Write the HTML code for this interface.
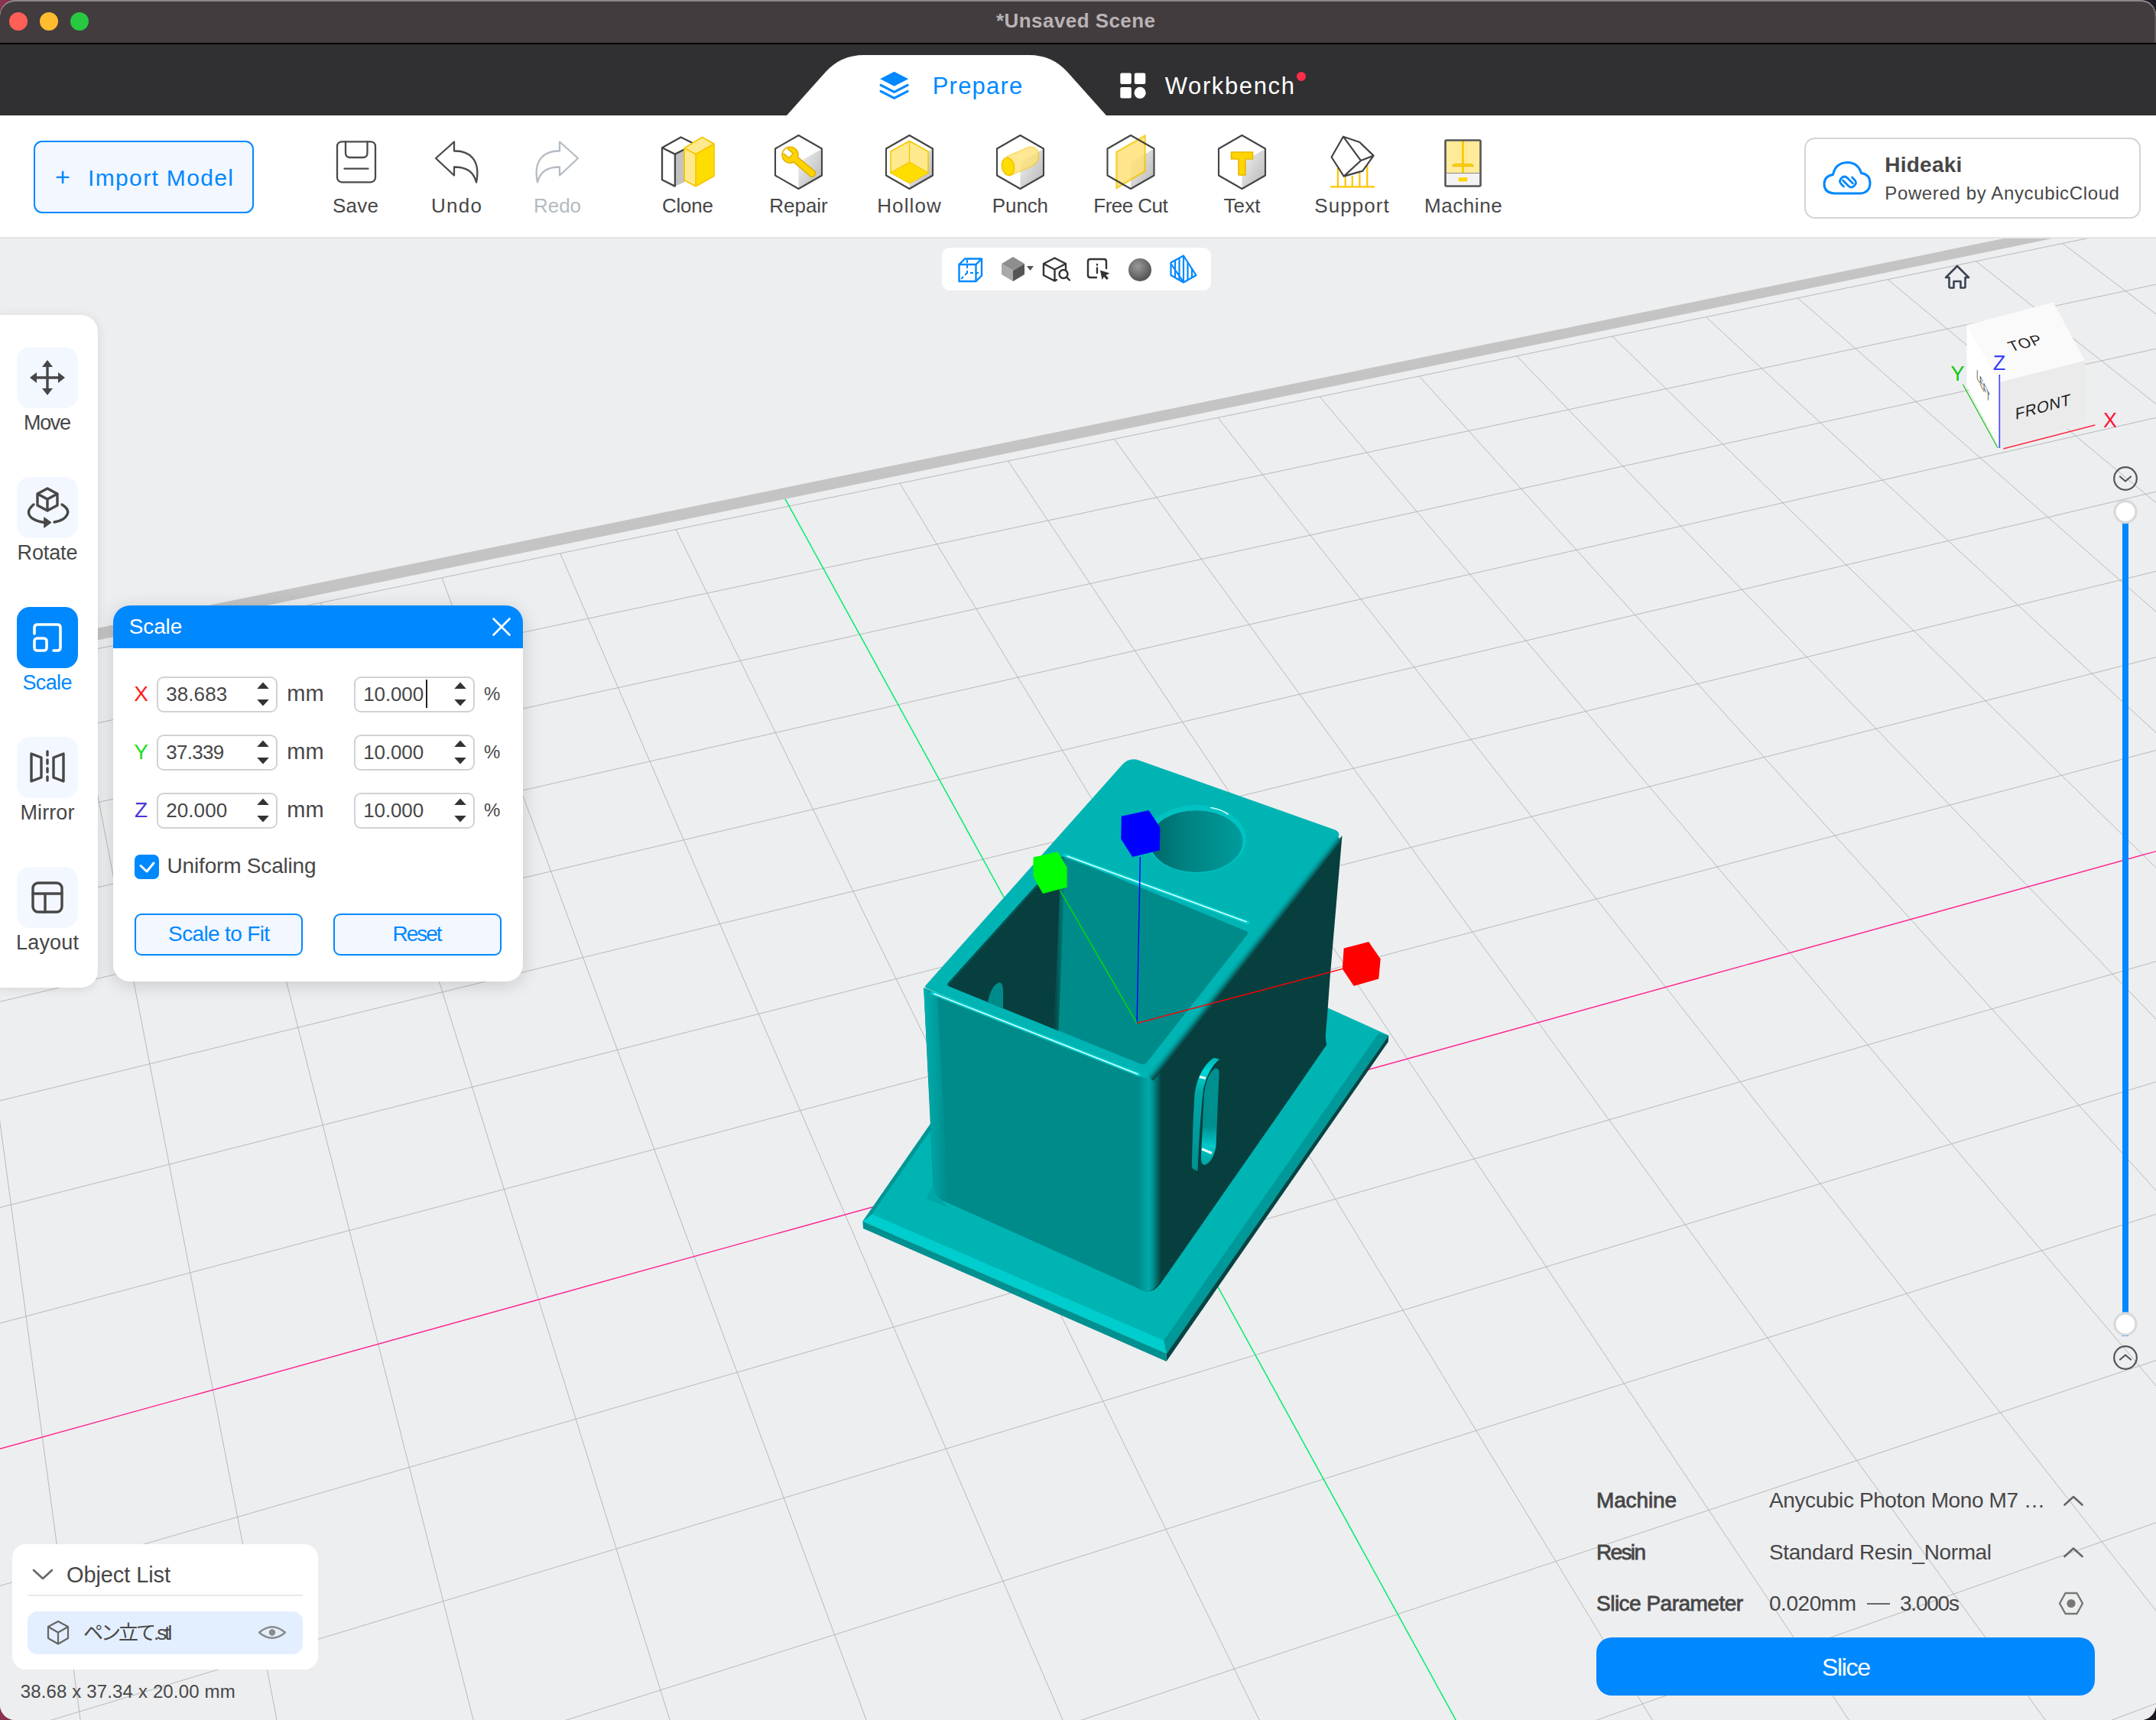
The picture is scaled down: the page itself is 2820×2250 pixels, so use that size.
<!DOCTYPE html>
<html><head><meta charset="utf-8"><title>Unsaved Scene</title>
<style>
html,body{margin:0;padding:0;}
body{width:2820px;height:2250px;position:relative;overflow:hidden;background:linear-gradient(90deg,#8c3450 0,#5a2036 2%,#1c1a22 60%);font-family:"Liberation Sans","Noto Sans CJK JP",sans-serif;}
#win{position:absolute;left:0;top:0;width:2820px;height:2250px;border-radius:20px;overflow:hidden;background:#edeef0;}
.t{position:absolute;white-space:pre;line-height:1;}
svg{display:block;overflow:visible}
</style></head><body><div id="win">
<svg id="scene" width="2820" height="2250" viewBox="0 0 2820 2250" style="position:absolute;left:0;top:0">
<rect x="0" y="300" width="2820" height="1950" fill="#edeef0"/>
<polygon points="-1385,1148.4 3615.8,120.5 3599.8,111.9 -1379.8,1129.8" fill="#c4c4c4" />
<path d="M-1649.3,5158.9L-990.5,1079.4M-1199.4,4955.4L-798.9,1039.9M-774,4763.1L-611.9,1001.3M-371.1,4581L-429.5,963.7M10.8,4408.3L-251.5,926.9M373.5,4244.3L-77.7,891.1M718.4,4088.3L92,856.1M1046.7,3939.9L257.7,821.9M1359.6,3798.4L419.7,788.4M1658.2,3663.4L578,755.8M1943.4,3534.5L732.8,723.9M2216.1,3411.2L884.1,692.6M2727.1,3180.1L1176.9,632.2M2966.9,3071.7L1318.6,603M3197,2967.7L1457.3,574.4M3418.1,2867.7L1593.1,546.4M3630.6,2771.6L1726.1,518.9M3835,2679.2L1856.3,492.1M4031.7,2590.3L1983.9,465.7M4221.3,2504.5L2108.9,439.9M4404.1,2421.9L2231.4,414.7M4580.4,2342.2L2351.5,389.9M4750.6,2265.2L2469.2,365.6M4915,2190.9L2584.7,341.8M5073.9,2119.1L2697.9,318.4M5227.6,2049.6L2809,295.5M5376.2,1982.4L2918,273M5520.1,1917.3L3025,250.9M5659.5,1854.3L3130,229.3M5794.6,1793.2L3233.1,208M5925.6,1734L3334.3,187.1M6052.6,1676.5L3433.7,166.6M-1649.3,5158.9L6052.6,1676.5M-1566.9,4648.6L5805.2,1533.9M-1495.4,4205.4L5575.8,1401.6M-1432.6,3817L5362.6,1278.7M-1377.2,3473.7L5163.9,1164.2M-1327.8,3168.1L4978.2,1057.1M-1283.6,2894.3L4804.4,956.9M-1243.8,2647.7L4641.4,862.9M-1207.7,2424.3L4488,774.5M-1144.9,2035.3L4207.4,612.7M-1117.4,1864.9L4078.6,538.5M-1092,1708L3956.8,468.2M-1068.6,1563.1L3841.3,401.6M-1046.9,1428.8L3731.6,338.4M-1026.8,1304.1L3627.4,278.3M-1008,1187.9L3528.2,221.1M-990.5,1079.4L3433.7,166.6" stroke="#b9b9b9" stroke-width="1" fill="none"/>
<path d="M-1174.9,2221L4343.6,691.3" stroke="#ff1f8e" stroke-width="1.4" fill="none"/>
<path d="M2477.1,3293.2L1026.9,652.6" stroke="#00ee6e" stroke-width="1.5" fill="none"/>
<defs>
<linearGradient id="gcorner" x1="0" x2="1" y1="0" y2="0"><stop offset="0" stop-color="#008b8b"/><stop offset="0.45" stop-color="#00a9a9"/><stop offset="0.62" stop-color="#009292"/><stop offset="1" stop-color="#073f3f"/></linearGradient>
<linearGradient id="ghole" x1="0" x2="1" y1="0" y2="0"><stop offset="0" stop-color="#006666"/><stop offset="0.35" stop-color="#008080"/><stop offset="0.7" stop-color="#008f8f"/><stop offset="1" stop-color="#009c9c"/></linearGradient>
<linearGradient id="gicorner" x1="0" x2="1" y1="0" y2="0"><stop offset="0" stop-color="#073f3f"/><stop offset="1" stop-color="#008b8b"/></linearGradient>
<linearGradient id="gslot" x1="0" x2="0" y1="0" y2="1"><stop offset="0" stop-color="#00b4b4"/><stop offset="0.12" stop-color="#00d8d8"/><stop offset="0.3" stop-color="#00a8a8"/><stop offset="1" stop-color="#008f8f"/></linearGradient>
<linearGradient id="gslot2" x1="0" x2="0" y1="0" y2="1"><stop offset="0" stop-color="#008f8f"/><stop offset="0.6" stop-color="#008f8f"/><stop offset="0.8" stop-color="#00c8c8"/><stop offset="1" stop-color="#00a0a0"/></linearGradient>
<linearGradient id="grimR" gradientUnits="userSpaceOnUse" x1="1600" y1="1230" x2="1612" y2="1240"><stop offset="0" stop-color="#00b4b4"/><stop offset="1" stop-color="#073f3f"/></linearGradient>
</defs>
<polygon points="1128.4,1597.7 1525.9,1770.7 1816.3,1354.4 1421.5,1176" fill="#00b4b4" />
<polygon points="1128.4,1597.7 1140.5,1588.4 1421.5,1186 1421.5,1176" fill="#009696" />
<polygon points="1140.5,1588.4 1522.3,1753.5 1525.9,1770.7 1128.4,1597.7" fill="#00cdcd" />
<polygon points="1128.4,1597.7 1525.9,1770.7 1525.6,1780.9 1129,1607" fill="#009090" />
<polygon points="1522.3,1753.5 1803.3,1351.2 1816.3,1354.4 1525.9,1770.7" fill="#009999" />
<polygon points="1525.9,1770.7 1816.3,1354.4 1815.8,1362.8 1525.6,1780.9" fill="#074444" />
<path d="M1508,1412 L1755.5,1093 L1739.5,1280 L1736.3,1325 L1734,1352.6 Q1733.5,1362 1735.3,1366.5 L1684.7,1440 L1518,1679 Q1510,1690 1500,1689 Z" fill="#073f3f"/>
<path d="M1208.2,1292 L1500,1409 L1502,1690 Q1497,1690 1490,1686 L1232,1570 Q1222,1566 1221,1555 Z" fill="#008b8b"/>
<path d="M1221,1550 Q1214,1560 1212,1568 L1240,1580 L1232,1569 Q1223,1565 1221,1550Z" fill="#00a6a6"/>
<path d="M1489,1405 L1519,1404 L1519,1672 Q1510,1692 1496,1689 L1489,1686 Z" fill="url(#gcorner)"/>
<path d="M1211.7,1292.8 Q1208.5,1291.5 1210.8,1288.9 L1467.7,1000.5 Q1477,990 1490.2,994.7 L1744.7,1085 Q1756,1089 1748.6,1098.5 L1510.4,1403.5 Q1503,1413 1491.9,1408.4 Z" fill="#00b4b4"/>
<defs><linearGradient id="grim" gradientUnits="userSpaceOnUse" x1="1499.5" y1="1406.7" x2="1508.5" y2="1413.8"><stop offset="0" stop-color="#00b4b4"/><stop offset="0.35" stop-color="#00a0a0"/><stop offset="0.75" stop-color="#086060"/><stop offset="1" stop-color="#073f3f"/></linearGradient></defs>
<polygon points="1499.5,1406.7 1746,1091.7 1755,1098.8 1508.5,1413.8" fill="url(#grim)" />
<defs><linearGradient id="gleft" x1="0" x2="1" y1="0" y2="0"><stop offset="0" stop-color="#00b0b0"/><stop offset="1" stop-color="#008b8b"/></linearGradient></defs>
<polygon points="1208.2,1292.5 1226,1300 1240,1574 1222,1560" fill="url(#gleft)" />
<clipPath id="cpopen"><path d="M1241.8,1290.6 Q1237.2,1288.7 1240.6,1285 L1387.8,1122 Q1390.5,1119 1394.2,1120.5 L1629.4,1217.6 Q1634,1219.5 1630.9,1223.4 L1501.3,1388.5 Q1497,1394 1490.5,1391.4 Z"/></clipPath>
<g clip-path="url(#cpopen)">
<polygon points="1237.2,1288.7 1390.5,1119 1634,1219.5 1497,1394" fill="#008b8b" />
<polygon points="1237.2,1288.7 1389.5,1119 1378.5,1349.2 1230,1300" fill="#073f3f" />
<polygon points="1388,1119 1394,1119 1384.5,1349.2 1378.5,1349.2" fill="url(#gicorner)" />
<path d="M1292,1311 Q1296,1290 1306,1285.5 Q1312,1284 1312,1296 L1312,1323 L1291,1314 Z" fill="#008b8b"/>
<path d="M1237.2,1288.7 L1390.5,1119" stroke="#0a6a6a" stroke-width="5" opacity="0.55" fill="none"/>
</g>
<path d="M1392.8,1118.8 L1632.1,1206.6" stroke="#00d6d6" stroke-width="5" stroke-linecap="round" fill="none" opacity="0.8"/>
<path d="M1396,1120 L1630,1205.8" stroke="#d8ffff" stroke-width="1.6" stroke-linecap="round" fill="none"/>
<path d="M1219.8,1299.2 L1489.5,1405.6" stroke="#00d6d6" stroke-width="5" stroke-linecap="round" fill="none" opacity="0.8"/>
<path d="M1222,1300 L1488,1405" stroke="#d8ffff" stroke-width="1.6" stroke-linecap="round" fill="none"/>
<ellipse cx="1564.6" cy="1097.5" rx="65.5" ry="44.5" fill="#00c2c2"/>
<ellipse cx="1564.6" cy="1100.6" rx="60.9" ry="40.4" fill="url(#ghole)"/>
<path d="M1584,1056.5 Q1598,1059 1606,1065" stroke="#c8ffff" stroke-width="1.6" fill="none" stroke-linecap="round"/>
<path d="M1587,1384 Q1594,1384.5 1594.6,1386 Q1580,1398 1574,1425 Q1569,1470 1566.5,1531.8 Q1560,1530 1558.8,1526.7 Q1560,1470 1562.7,1429.5 Q1568,1398 1587,1384 Z" fill="url(#gslot)"/>
<path d="M1589.5,1397.5 Q1595,1397 1594.6,1404 L1590.5,1500 Q1586,1521 1575.5,1524 Q1570,1524 1571,1512 L1574.8,1432 Q1578,1405 1589.5,1397.5 Z" fill="url(#gslot2)"/>
<path d="M1569,1408.5 L1577,1410.5" stroke="#e8ffff" stroke-width="3" fill="none"/>
<path d="M1572,1503 L1585,1508.5" stroke="#e8ffff" stroke-width="3.4" fill="none"/>
<path d="M1487.1,1338.6 L1491.4,1121" stroke="#0000ff" stroke-width="1.4"/>
<path d="M1487.1,1338.6 L1386.3,1164.4" stroke="#00e000" stroke-width="1.4"/>
<path d="M1487.1,1338.6 L1756,1267.4" stroke="#ff0000" stroke-width="1.4"/>
<polygon points="1351.5,1121.6 1383.5,1114.2 1395.6,1134.7 1395.6,1160.7 1364,1169.1 1351.5,1146.7" fill="#00ff00" />
<polygon points="1466.8,1067.7 1502.6,1059.9 1517.4,1082.6 1516.9,1112.3 1481.2,1121.1 1466.3,1097.4" fill="#0000ff" />
<polygon points="1757.7,1240.5 1790.2,1232.1 1805.7,1254.4 1803.3,1280.5 1770.7,1289.8 1755.8,1267.4" fill="#ff0000" />
</svg>
<svg style="position:absolute;left:0;top:0" width="2820" height="2250" viewBox="0 0 2820 2250"><polygon points="2572.6,425 2685.5,395.5 2727.2,471.7 2615.3,500.2" fill="#fafafa"/><polygon points="2572.6,425 2615.3,500.2 2615.3,585.7 2572.6,505" fill="#ffffff"/><polygon points="2615.3,500.2 2727.2,471.7 2727.2,554 2615.3,585.7" fill="#ebebeb"/><path d="M2615.3,490 L2615.3,586" stroke="#4a4aff" stroke-width="1.7"/><path d="M2620.4,587 L2740.4,556" stroke="#ff2a3c" stroke-width="1.4"/><path d="M2567.5,503 L2613,585.7" stroke="#12c812" stroke-width="1.2"/><text transform="matrix(0.969,-0.247,0.494,0.870,2648.9,448.4)" font-family='"Liberation Sans",sans-serif' font-size="20" fill="#222" text-anchor="middle" y="7" letter-spacing="1">TOP</text><text transform="matrix(0.966,-0.26,0,1,2672.3,531.8)" font-family='"Liberation Sans",sans-serif' font-size="21" fill="#222" text-anchor="middle" y="7.5" letter-spacing="0.6">FRONT</text><text transform="matrix(0.42,0.82,0,1,2594,505)" font-family='"Liberation Sans",sans-serif' font-size="17" fill="#222" text-anchor="middle" y="6">LEFT</text><text x="2615" y="483.5" font-family='"Liberation Sans",sans-serif' font-size="27" fill="#3d3dff" text-anchor="middle">Z</text><text x="2560.5" y="498" font-family='"Liberation Sans",sans-serif' font-size="27" fill="#12c812" text-anchor="middle">Y</text><text x="2760" y="559" font-family='"Liberation Sans",sans-serif' font-size="27" fill="#ff1030" text-anchor="middle">X</text></svg>
<div style="position:absolute;left:0px;top:0px;width:2820px;height:57px;background:#423c3e;border-radius:20px 20px 0 0;box-shadow:inset 0 2px 0 #8b8687, inset -2px 0 0 #5a5557;"></div>
<div style="position:absolute;left:0px;top:56px;width:2820px;height:2px;background:#000;"></div>
<div style="position:absolute;left:0px;top:58px;width:2820px;height:93px;background:#303032;"></div>
<div style="position:absolute;left:12px;top:16px;width:24px;height:24px;background:#ff5f57;border-radius:50%;"></div>
<div style="position:absolute;left:52px;top:16px;width:24px;height:24px;background:#febc2e;border-radius:50%;"></div>
<div style="position:absolute;left:92px;top:16px;width:24px;height:24px;background:#28c840;border-radius:50%;"></div>
<span class="t" style="left:1303.0px;top:14.3px;font-size:26px;color:#b9b3b5;font-weight:700;letter-spacing:0.44px;">*Unsaved Scene</span>
<svg style="position:absolute;left:0;top:0" width="2820" height="160" viewBox="0 0 2820 160"><path d="M1029,151 L1080,94 Q1100,72 1130,72 L1346,72 Q1376,72 1396,94 L1447,151 Z" fill="#fff"/></svg>
<svg style="position:absolute;left:0;top:0" width="2820" height="2250" viewBox="0 0 2820 2250"><g transform="translate(1169.6,111.8)"><path d="M0,-18 L18.5,-8.5 L0,1 L-18.5,-8.5 Z" fill="#0088ff"/><path d="M-17.5,-0.5 L0,8.5 L17.5,-0.5 M-17.5,7.5 L0,16.5 L17.5,7.5" stroke="#0088ff" stroke-width="3.2" fill="none" stroke-linecap="round" stroke-linejoin="round"/></g></svg>
<span class="t" style="left:1219.7px;top:97.4px;font-size:31px;color:#0088ff;letter-spacing:1.22px;">Prepare</span>
<svg style="position:absolute;left:0;top:0" width="2820" height="2250" viewBox="0 0 2820 2250"><g transform="translate(1465.3,95.6)" fill="#fff"><rect x="0" y="0" width="14.5" height="14.5" rx="2"/><rect x="18.5" y="0" width="14.5" height="14.5" rx="2"/><rect x="0" y="18.5" width="14.5" height="14.5" rx="2"/><circle cx="25.8" cy="25.8" r="7.6"/></g></svg>
<span class="t" style="left:1523.7px;top:97.4px;font-size:31px;color:#fff;letter-spacing:1.63px;">Workbench</span>
<div style="position:absolute;left:1696px;top:94px;width:12px;height:12px;background:#ff2d46;border-radius:50%;"></div>
<div style="position:absolute;left:0px;top:151px;width:2820px;height:159px;background:#fff;"></div>
<div style="position:absolute;left:0px;top:310px;width:2820px;height:2px;background:#e4e5e7;"></div>
<div style="position:absolute;left:44px;top:184px;width:288px;height:95px;box-sizing:border-box;border:2px solid #0088ff;border-radius:11px;background:#f3f7ff;"></div>
<span class="t" style="left:72.1px;top:214.4px;font-size:34px;color:#0088ff;">+</span>
<span class="t" style="left:115.0px;top:218.3px;font-size:30px;color:#0088ff;letter-spacing:1.36px;">Import Model</span>
<span class="t" style="left:435.0px;top:255.8px;font-size:26px;color:#474747;letter-spacing:0.24px;">Save</span>
<span class="t" style="left:564.0px;top:255.8px;font-size:26px;color:#474747;letter-spacing:1.28px;">Undo</span>
<span class="t" style="left:698.0px;top:255.8px;font-size:26px;color:#b3bac2;letter-spacing:-0.05px;">Redo</span>
<span class="t" style="left:866.0px;top:255.8px;font-size:26px;color:#474747;letter-spacing:-0.23px;">Clone</span>
<span class="t" style="left:1006.2px;top:255.8px;font-size:26px;color:#474747;">Repair</span>
<span class="t" style="left:1147.2px;top:255.8px;font-size:26px;color:#474747;letter-spacing:1.11px;">Hollow</span>
<span class="t" style="left:1297.8px;top:255.8px;font-size:26px;color:#474747;letter-spacing:-0.11px;">Punch</span>
<span class="t" style="left:1430.3px;top:255.8px;font-size:26px;color:#474747;letter-spacing:-0.54px;">Free Cut</span>
<span class="t" style="left:1600.5px;top:255.8px;font-size:26px;color:#474747;letter-spacing:0.10px;">Text</span>
<span class="t" style="left:1719.3px;top:255.8px;font-size:26px;color:#474747;letter-spacing:1.05px;">Support</span>
<span class="t" style="left:1862.9px;top:255.8px;font-size:26px;color:#474747;letter-spacing:0.59px;">Machine</span>
<svg style="position:absolute;left:0;top:0" width="2820" height="320" viewBox="0 0 2820 320"><defs><linearGradient id="ghex" x1="0" y1="0" x2="1" y2="1"><stop offset="0" stop-color="#f4f4f4"/><stop offset="1" stop-color="#b4b4b4"/></linearGradient></defs><g fill="none" stroke="#4a4a4a" stroke-width="2.3" stroke-linejoin="round" stroke-linecap="round"><rect x="441" y="185.3" width="50" height="53" rx="6"/><path d="M452,185.5 L452,200 Q452,206 458,206 L474.5,206 Q480.5,206 480.5,200 L480.5,185.5"/><path d="M450.5,220.7 L481.5,220.7"/></g><path transform="translate(598,207)" d="M-28,0 L-4,-21.5 L-4,-9.5 C 16,-10 31,2 25,31.5 C 21,17 12,11.5 -4,11.5 L-4,22.5 Z" fill="none" stroke="#4a4a4a" stroke-width="2.3" stroke-linejoin="round"/><path transform="translate(728,207) scale(-1,1)" d="M-28,0 L-4,-21.5 L-4,-9.5 C 16,-10 31,2 25,31.5 C 21,17 12,11.5 -4,11.5 L-4,22.5 Z" fill="none" stroke="#b5bcc4" stroke-width="2.3" stroke-linejoin="round"/><polygon points="882.9,201.6 895.8,195.1 895.8,237.9 882.9,243.6" fill="#c2c2c2"/><polygon points="866,193.2 890.6,179.5 906.2,187.3 882.9,201.6 882.9,243.6 866,235.3" fill="#fff"/><path d="M866,193.2 L890.6,179.5 L906.2,187.3 M866,193.2 L882.9,201.6 L882.9,243.6 L866,235.3 Z M882.9,201.6 L895,195.5" fill="none" stroke="#444" stroke-width="2.3" stroke-linejoin="round"/><polygon points="895.1,193.8 910.1,201.6 910.1,243.6 895.1,235.8" fill="#ffe98f"/><polygon points="895.1,193.8 918.4,179.5 934,188.1 910.1,201.6" fill="#ffe98f"/><polygon points="910.1,201.6 934,188.1 934,230.1 910.1,243.6" fill="#ffdd00"/><path d="M895.1,193.8 L918.4,179.5 L934,188.1 L934,230.1 L910.1,243.6 L895.1,235.8 Z M895.1,193.8 L910.1,201.6 L934,188.1 M910.1,201.6 L910.1,243.6" fill="none" stroke="#f5c800" stroke-width="1.8" stroke-linejoin="round"/><polygon points="1044.5,212 1075.0,194.5 1075.0,229.5 1044.5,247" fill="url(#ghex)"/><polygon points="1044.5,177 1075.0,194.5 1044.5,212 1014.0,194.5" fill="#fff"/><g transform="translate(1047.0,214) rotate(40)"><path d="M-8,-4.2 L20,-4.2 Q24,-4.2 24,0 Q24,4.2 20,4.2 L-8,4.2 A10.5,10.5 0 1 1 -8,-4.2 Z" fill="#ffd400" stroke="#e0b000" stroke-width="1.5"/><path d="M-27,-4 L-16,-4 L-16,4 L-27,4 Z" fill="#fff"/><path d="M-26.2,-4 L-16,-4 L-16,4 L-26.2,4" fill="none" stroke="#e0b000" stroke-width="1.5"/></g><polygon points="1044.5,177 1075.0,194.5 1075.0,229.5 1044.5,247 1014.0,229.5 1014.0,194.5" fill="none" stroke="#444" stroke-width="2.1" stroke-linejoin="round"/><polygon points="1189.5,212 1220.0,194.5 1220.0,229.5 1189.5,247" fill="url(#ghex)"/><polygon points="1189.5,177 1220.0,194.5 1189.5,212 1159.0,194.5" fill="#fff"/><polygon points="1189.5,184.5 1214.0,198 1214.0,226 1189.5,239.5 1165.0,226 1165.0,198" fill="#ffe98f" stroke="#f5c800" stroke-width="1.6"/><polygon points="1189.5,212 1214.0,226 1189.5,239.5 1165.0,226" fill="#ffdd00"/><path d="M1189.5,184.5 L1189.5,212 L1214.0,226 M1189.5,212 L1165.0,226" stroke="#f5c800" stroke-width="1.4" fill="none"/><polygon points="1189.5,177 1220.0,194.5 1220.0,229.5 1189.5,247 1159.0,229.5 1159.0,194.5" fill="none" stroke="#444" stroke-width="2.1" stroke-linejoin="round"/><polygon points="1334.5,212 1365.0,194.5 1365.0,229.5 1334.5,247" fill="url(#ghex)"/><polygon points="1334.5,177 1365.0,194.5 1334.5,212 1304.0,194.5" fill="#fff"/><path d="M1316.5,205 L1346.5,192 Q1358.5,192 1358.5,204 Q1358.5,214 1348.5,218 L1320.5,230 Z" fill="#ffe070" opacity="0.75" stroke="#f5c800" stroke-width="1.2"/><ellipse cx="1318.5" cy="218" rx="8" ry="11.5" transform="rotate(-12 1318.5 218)" fill="#ffdd00" stroke="#f0c000" stroke-width="1.5"/><polygon points="1334.5,177 1365.0,194.5 1365.0,229.5 1334.5,247 1304.0,229.5 1304.0,194.5" fill="none" stroke="#444" stroke-width="2.1" stroke-linejoin="round"/><polygon points="1479,212 1509.5,194.5 1509.5,229.5 1479,247" fill="url(#ghex)"/><polygon points="1479,177 1509.5,194.5 1479,212 1448.5,194.5" fill="#fff"/><polygon points="1460.5,199 1497.5,177.5 1497.5,224 1460.5,246" fill="#ffe070" opacity="0.8" stroke="#f5c800" stroke-width="2.4"/><polygon points="1479,177 1509.5,194.5 1509.5,229.5 1479,247 1448.5,229.5 1448.5,194.5" fill="none" stroke="#444" stroke-width="2.1" stroke-linejoin="round"/><polygon points="1624.5,212 1655.0,194.5 1655.0,229.5 1624.5,247" fill="url(#ghex)"/><polygon points="1624.5,177 1655.0,194.5 1624.5,212 1594.0,194.5" fill="#fff"/><path d="M1610.5,199 L1638.5,199 L1638.5,208 L1629.0,208 L1629.0,229 L1620.0,229 L1620.0,208 L1610.5,208 Z" fill="#ffd400" stroke="#e6b800" stroke-width="1.6"/><polygon points="1624.5,177 1655.0,194.5 1655.0,229.5 1624.5,247 1594.0,229.5 1594.0,194.5" fill="none" stroke="#444" stroke-width="2.1" stroke-linejoin="round"/><g stroke="#ffc400" stroke-width="2.2" fill="none"><path d="M1740,244.4 L1798,244.4"/><path d="M1749.9,219.7 V244 M1759.7,231.4 V244 M1768.8,230.1 V244 M1778.4,224.9 V244 M1788.3,215.8 V244"/></g><path d="M1756.9,178.7 L1778.4,186 L1796.6,203.6 L1782.3,223.6 L1757.7,230.6 L1741.6,205.5 Z M1756.9,178.7 L1780,210 L1796.6,203.6 M1780,210 L1757.7,230.6" fill="#fff" stroke="#444" stroke-width="2.2" stroke-linejoin="round"/><rect x="1890.5" y="183.5" width="46" height="60" fill="#f3f3f3"/><rect x="1890.5" y="183.5" width="46" height="43" fill="#ffeb99"/><path d="M1913.5,184 V226" stroke="#ffcc00" stroke-width="3"/><path d="M1900,217.5 Q1900,214.5 1905,214.5 L1922,214.5 Q1927,214.5 1927,217.5 Z" fill="#ffd400" stroke="#e6b800" stroke-width="1.2"/><rect x="1907.8" y="232.2" width="11.4" height="5.2" fill="#ffd400"/><rect x="1890.5" y="183.5" width="46" height="60" fill="none" stroke="#555" stroke-width="2.6" rx="1.5"/><path d="M1891,226.5 H1936" stroke="#888" stroke-width="1"/></svg>
<div style="position:absolute;left:2360px;top:180px;width:440px;height:106px;box-sizing:border-box;border:2px solid #d4d4d4;border-radius:14px;background:#fff;"></div>
<svg style="position:absolute;left:0;top:0" width="2820" height="2250" viewBox="0 0 2820 2250"><g transform="translate(2384.5,211)" fill="none" stroke="#0088ff" stroke-width="3" stroke-linecap="round" stroke-linejoin="round"><path d="M14,42 Q1.5,41 1.5,29.5 Q2,19 13,17.5 Q16,2 32,1.5 Q46,2 50,15.5 Q61.5,17 61.5,29 Q61,41 49,42 Z"/><path d="M27,33 L24,30 Q20,26 24,22 Q28,18 32,22 L39,29 M38,21 L41,24 Q45,28 41,32 Q37,36 33,32 L26,25" stroke-width="2.8"/></g></svg>
<span class="t" style="left:2465.3px;top:202.3px;font-size:28px;color:#474747;font-weight:700;letter-spacing:0.23px;">Hideaki</span>
<span class="t" style="left:2465.3px;top:241.3px;font-size:24px;color:#474747;letter-spacing:0.63px;">Powered by AnycubicCloud</span>
<div style="position:absolute;left:1232px;top:324px;width:352px;height:56px;background:#fff;border-radius:10px;"></div>
<svg style="position:absolute;left:0;top:0" width="2820" height="400" viewBox="0 0 2820 400"><g fill="none" stroke="#0088ff" stroke-width="2.4" stroke-linejoin="round"><rect x="1254.5" y="346" width="22" height="22"/><path d="M1254.5,346 L1262,338.5 L1284,338.5 L1284,360.5 L1276.5,368 M1276.5,346 L1284,338.5"/><path d="M1265,340 V357 H1282 M1265,357 L1256,366" stroke-dasharray="4 3" stroke-width="2"/></g><polygon points="1325,336 1340,345 1325,354 1310,345" fill="#8e8e8e"/><polygon points="1310,345 1325,354 1325,368 1310,359" fill="#a9a9a9"/><polygon points="1325,354 1340,345 1340,359 1325,368" fill="#555"/><polygon points="1343,348 1352,348 1347.5,354" fill="#555"/><g fill="none" stroke="#333" stroke-width="2.4" stroke-linejoin="round" stroke-linecap="round"><path d="M1394,352 V345 L1379.5,337.5 L1365,345 V360 L1379.5,367.5 L1382,366 M1365,345 L1379.5,352.5 L1394,345 M1379.5,352.5 V367.5"/><circle cx="1391" cy="358.5" r="5.5"/><path d="M1395,362.5 L1399,366.5"/></g><g fill="none" stroke="#333" stroke-width="2.4" stroke-linejoin="round" stroke-linecap="round"><path d="M1447,351 V342 Q1447,339 1444,339 L1426,339 Q1423,339 1423,342 V360 Q1423,363 1426,363 L1434,363"/><path d="M1435,346 V346.5 M1435,350.5 V357"/></g><path d="M1439,353.5 L1451.5,357.5 L1446.5,360 L1450,364 L1447.5,366 L1444,362 L1441.5,366 Z" fill="#333"/><defs><radialGradient id="gsph" cx="0.4" cy="0.35" r="0.7"><stop offset="0" stop-color="#9a9a9a"/><stop offset="1" stop-color="#4e4e4e"/></radialGradient></defs><circle cx="1491" cy="353" r="15" fill="url(#gsph)"/><g fill="none" stroke="#0088ff" stroke-width="2.2" stroke-linejoin="round"><path d="M1548,334.5 L1564.5,360 L1548,369.5 L1531.5,360 L1531.5,343.5 Z"/><path d="M1548,334.5 V369.5 M1537,341 V363 M1542.5,338 V366 M1553.5,343 V366 M1559,351.5 V363 M1531.5,345 L1548,369"/></g></svg>
<svg style="position:absolute;left:0;top:0" width="2820" height="400" viewBox="0 0 2820 400"><g transform="translate(2560,363)" fill="none" stroke="#3a4354" stroke-width="2.6" stroke-linejoin="round" stroke-linecap="round"><path d="M-15,0 L0,-15 L15,0 L10.5,0 L10.5,12 Q10.5,13.5 9,13.5 L4.5,13.5 L4.5,5 L-4.5,5 L-4.5,13.5 L-9,13.5 Q-10.5,13.5 -10.5,12 L-10.5,0 Z"/></g></svg>
<svg style="position:absolute;left:0;top:0" width="2820" height="2250" viewBox="0 0 2820 2250"><rect x="2776" y="654" width="8" height="1094" fill="#0088ff"/><circle cx="2780" cy="669.5" r="14" fill="#fff" stroke="#dadada" stroke-width="3.4"/><circle cx="2780" cy="1732" r="14" fill="#fff" stroke="#dadada" stroke-width="3.4"/><circle cx="2780" cy="626" r="14.8" fill="none" stroke="#555" stroke-width="2.2"/><path d="M2773,623.5 L2780,629.5 L2787,623.5" fill="none" stroke="#555" stroke-width="2.2" stroke-linecap="round" stroke-linejoin="round"/><circle cx="2780" cy="1776" r="14.8" fill="none" stroke="#555" stroke-width="2.2"/><path d="M2773,1778.5 L2780,1772.5 L2787,1778.5" fill="none" stroke="#555" stroke-width="2.2" stroke-linecap="round" stroke-linejoin="round"/></svg>
<div style="position:absolute;left:-20px;top:412px;width:148px;height:880px;background:#fff;border-radius:22px;box-shadow:0 2px 14px rgba(0,0,0,0.10);"></div>
<div style="position:absolute;left:22px;top:454px;width:80px;height:80px;background:#f3f7ff;border-radius:17px;"></div>
<span class="t" style="left:31.0px;top:539.8px;font-size:27px;color:#474747;letter-spacing:-1.34px;">Move</span>
<div style="position:absolute;left:22px;top:624px;width:80px;height:80px;background:#f3f7ff;border-radius:17px;"></div>
<span class="t" style="left:22.5px;top:709.8px;font-size:27px;color:#474747;letter-spacing:-0.11px;">Rotate</span>
<div style="position:absolute;left:22px;top:794px;width:80px;height:80px;background:#0088ff;border-radius:17px;"></div>
<span class="t" style="left:29.5px;top:879.8px;font-size:27px;color:#0088ff;letter-spacing:-0.64px;">Scale</span>
<div style="position:absolute;left:22px;top:964px;width:80px;height:80px;background:#f3f7ff;border-radius:17px;"></div>
<span class="t" style="left:26.5px;top:1049.8px;font-size:27px;color:#474747;letter-spacing:0.10px;">Mirror</span>
<div style="position:absolute;left:22px;top:1134px;width:80px;height:80px;background:#f3f7ff;border-radius:17px;"></div>
<span class="t" style="left:21.0px;top:1219.8px;font-size:27px;color:#474747;letter-spacing:0.18px;">Layout</span>
<svg style="position:absolute;left:0;top:0" width="200" height="1300" viewBox="0 0 200 1300"><g transform="translate(62,494)"><path d="M-16,0 H16 M0,-16 V16" fill="none" stroke="#474747" stroke-width="3.4" stroke-linecap="round" stroke-linejoin="round"/><path d="M-23,0 L-14,-7 V7 Z M23,0 L14,-7 V7 Z M0,-23 L-7,-14 H7 Z M0,23 L-7,14 H7 Z" fill="#474747"/></g><g transform="translate(62,664)" fill="none" stroke="#474747" stroke-width="3.4" stroke-linecap="round" stroke-linejoin="round"><path d="M0,-25 L13,-18 V-3 L0,4 L-13,-3 V-18 Z M-13,-18 L0,-11 L13,-18 M0,-11 V4"/><path d="M-18,-4 Q-30,6 -20,14 Q-12,19 -2,19.5"/><path d="M9,19 Q22,17 26,9 Q29,2 19,-4"/><path d="M-4,13 L5,19.5 L-4,26 Z" fill="#474747" stroke-width="1"/></g><g transform="translate(62,834)" fill="none" stroke="#fff" stroke-width="3.6" stroke-linecap="round" stroke-linejoin="round"><path d="M-17,-5 V-13 Q-17,-17 -13,-17 H13 Q17,-17 17,-13 V13 Q17,17 13,17 H8"/><rect x="-17" y="1" width="16" height="16" rx="3.5"/></g><g transform="translate(62,1004)" fill="none" stroke="#474747" stroke-width="3.4" stroke-linecap="round" stroke-linejoin="round"><path d="M-21,-18 L-8,-13 V13 L-21,18 Z M21,-18 L8,-13 V13 L21,18 Z"/><path d="M0,-21 V21" stroke-dasharray="5 6"/></g><g transform="translate(62,1174)" fill="none" stroke="#474747" stroke-width="3.4" stroke-linecap="round" stroke-linejoin="round" stroke-width="3.8"><rect x="-19" y="-19" width="38" height="38" rx="7"/><path d="M-19,-5 H19 M-3,-5 V19"/></g></svg>
<div style="position:absolute;left:148px;top:792px;width:536px;height:492px;background:#fff;border-radius:22px;box-shadow:0 4px 24px rgba(0,0,0,0.16);overflow:hidden;"><div style="position:absolute;left:0px;top:0px;width:536px;height:56px;background:#0088ff;"></div></div>
<span class="t" style="left:168.7px;top:806.3px;font-size:28px;color:#fff;letter-spacing:-0.11px;">Scale</span>
<svg style="position:absolute;left:644px;top:808px" width="24" height="24" viewBox="0 0 24 24"><path d="M1.5,1.5 L22.5,22.5 M22.5,1.5 L1.5,22.5" stroke="#fff" stroke-width="2.6" stroke-linecap="round"/></svg>
<span class="t" style="left:175.2px;top:894.3px;font-size:28px;color:#ff1a1a;">X</span>
<div style="position:absolute;left:204.5px;top:884.5px;width:158.5px;height:47px;box-sizing:border-box;border:2px solid #d2d2d2;border-radius:9px;background:#fff;"></div>
<span class="t" style="left:217.2px;top:895.3px;font-size:26px;color:#474747;letter-spacing:0.09px;">38.683</span>
<svg style="position:absolute;left:334.5px;top:891px" width="18" height="34" viewBox="0 0 18 34"><path d="M1.2,10 L9,1.5 L16.8,10 Z M1.2,24 L9,32.5 L16.8,24 Z" fill="#333"/></svg>
<div style="position:absolute;left:462.5px;top:884.5px;width:158.5px;height:47px;box-sizing:border-box;border:2px solid #d2d2d2;border-radius:9px;background:#fff;"></div>
<span class="t" style="left:475.2px;top:895.3px;font-size:26px;color:#474747;letter-spacing:-0.11px;">10.000</span>
<svg style="position:absolute;left:592.5px;top:891px" width="18" height="34" viewBox="0 0 18 34"><path d="M1.2,10 L9,1.5 L16.8,10 Z M1.2,24 L9,32.5 L16.8,24 Z" fill="#333"/></svg>
<span class="t" style="left:375.3px;top:893.3px;font-size:29px;color:#474747;">mm</span>
<span class="t" style="left:633.0px;top:896.3px;font-size:24px;color:#474747;">%</span>
<span class="t" style="left:175.2px;top:970.3px;font-size:28px;color:#22dd22;">Y</span>
<div style="position:absolute;left:204.5px;top:960.5px;width:158.5px;height:47px;box-sizing:border-box;border:2px solid #d2d2d2;border-radius:9px;background:#fff;"></div>
<span class="t" style="left:217.2px;top:971.3px;font-size:26px;color:#474747;letter-spacing:-0.71px;">37.339</span>
<svg style="position:absolute;left:334.5px;top:967px" width="18" height="34" viewBox="0 0 18 34"><path d="M1.2,10 L9,1.5 L16.8,10 Z M1.2,24 L9,32.5 L16.8,24 Z" fill="#333"/></svg>
<div style="position:absolute;left:462.5px;top:960.5px;width:158.5px;height:47px;box-sizing:border-box;border:2px solid #d2d2d2;border-radius:9px;background:#fff;"></div>
<span class="t" style="left:475.2px;top:971.3px;font-size:26px;color:#474747;letter-spacing:-0.11px;">10.000</span>
<svg style="position:absolute;left:592.5px;top:967px" width="18" height="34" viewBox="0 0 18 34"><path d="M1.2,10 L9,1.5 L16.8,10 Z M1.2,24 L9,32.5 L16.8,24 Z" fill="#333"/></svg>
<span class="t" style="left:375.3px;top:969.3px;font-size:29px;color:#474747;">mm</span>
<span class="t" style="left:633.0px;top:972.3px;font-size:24px;color:#474747;">%</span>
<span class="t" style="left:175.9px;top:1046.3px;font-size:28px;color:#4a35d8;">Z</span>
<div style="position:absolute;left:204.5px;top:1036.5px;width:158.5px;height:47px;box-sizing:border-box;border:2px solid #d2d2d2;border-radius:9px;background:#fff;"></div>
<span class="t" style="left:217.2px;top:1047.3px;font-size:26px;color:#474747;letter-spacing:0.09px;">20.000</span>
<svg style="position:absolute;left:334.5px;top:1043px" width="18" height="34" viewBox="0 0 18 34"><path d="M1.2,10 L9,1.5 L16.8,10 Z M1.2,24 L9,32.5 L16.8,24 Z" fill="#333"/></svg>
<div style="position:absolute;left:462.5px;top:1036.5px;width:158.5px;height:47px;box-sizing:border-box;border:2px solid #d2d2d2;border-radius:9px;background:#fff;"></div>
<span class="t" style="left:475.2px;top:1047.3px;font-size:26px;color:#474747;letter-spacing:-0.11px;">10.000</span>
<svg style="position:absolute;left:592.5px;top:1043px" width="18" height="34" viewBox="0 0 18 34"><path d="M1.2,10 L9,1.5 L16.8,10 Z M1.2,24 L9,32.5 L16.8,24 Z" fill="#333"/></svg>
<span class="t" style="left:375.3px;top:1045.3px;font-size:29px;color:#474747;">mm</span>
<span class="t" style="left:633.0px;top:1048.3px;font-size:24px;color:#474747;">%</span>
<div style="position:absolute;left:557px;top:889px;width:2px;height:37px;background:#222;"></div>
<div style="position:absolute;left:176px;top:1118px;width:32px;height:32px;background:#0088ff;border-radius:7px;"></div>
<svg style="position:absolute;left:176px;top:1118px" width="32" height="32" viewBox="0 0 32 32"><path d="M8,14.5 L16,22 L25,11" stroke="#fff" stroke-width="3" fill="none" stroke-linecap="round" stroke-linejoin="round"/></svg>
<span class="t" style="left:218.6px;top:1118.6px;font-size:28px;color:#474747;letter-spacing:-0.19px;">Uniform Scaling</span>
<div style="position:absolute;left:176px;top:1195px;width:220px;height:55px;box-sizing:border-box;border:2px solid #0088ff;border-radius:9px;background:#f3f7ff;"></div>
<span class="t" style="left:220.1px;top:1208.3px;font-size:28px;color:#0088ff;letter-spacing:-0.64px;">Scale to Fit</span>
<div style="position:absolute;left:436px;top:1195px;width:220px;height:55px;box-sizing:border-box;border:2px solid #0088ff;border-radius:9px;background:#f3f7ff;"></div>
<span class="t" style="left:513.5px;top:1208.3px;font-size:28px;color:#0088ff;letter-spacing:-2.04px;">Reset</span>
<div style="position:absolute;left:16px;top:2020px;width:400px;height:164px;background:#fff;border-radius:18px;"></div>
<svg style="position:absolute;left:40px;top:2050px" width="32" height="20" viewBox="0 0 32 20"><path d="M4,4 L16,15 L28,4" stroke="#666" stroke-width="2.6" fill="none" stroke-linecap="round" stroke-linejoin="round"/></svg>
<span class="t" style="left:87.0px;top:2045.8px;font-size:29px;color:#474747;letter-spacing:-0.10px;">Object List</span>
<div style="position:absolute;left:36px;top:2086px;width:360px;height:2px;background:#e9e9e9;"></div>
<div style="position:absolute;left:36px;top:2108px;width:360px;height:56px;background:#e3efff;border-radius:13px;"></div>
<svg style="position:absolute;left:0;top:0" width="2820" height="2250" viewBox="0 0 2820 2250"><g fill="none" stroke="#666" stroke-width="2.2" stroke-linejoin="round"><path d="M76,2121 L89,2128 V2143 L76,2150.5 L63,2143 V2128 Z M63,2128 L76,2135.5 L89,2128 M76,2135.5 V2150.5"/></g><g fill="none" stroke="#8a8a8a" stroke-width="2.4" stroke-linejoin="round"><path d="M339,2135.5 Q356,2121 373,2135.5 Q356,2150 339,2135.5 Z"/></g><circle cx="356" cy="2135.5" r="4.2" fill="#8a8a8a"/></svg>
<span class="t" style="left:109.0px;top:2123.3px;font-size:26px;color:#474747;letter-spacing:-3.00px;">ペン立て.stl</span>
<span class="t" style="left:26.7px;top:2201.3px;font-size:24px;color:#474747;letter-spacing:0.15px;">38.68 x 37.34 x 20.00 mm</span>
<span class="t" style="left:2088.0px;top:1949.3px;font-size:28px;color:#474747;letter-spacing:-0.14px;-webkit-text-stroke:0.8px #474747;">Machine</span>
<span class="t" style="left:2088.0px;top:2016.8px;font-size:28px;color:#474747;letter-spacing:-1.65px;-webkit-text-stroke:0.8px #474747;">Resin</span>
<span class="t" style="left:2088.0px;top:2084.3px;font-size:28px;color:#474747;letter-spacing:-0.51px;-webkit-text-stroke:0.8px #474747;">Slice Parameter</span>
<span class="t" style="left:2314.0px;top:1949.3px;font-size:28px;color:#474747;letter-spacing:-0.39px;">Anycubic Photon Mono M7 …</span>
<span class="t" style="left:2314.0px;top:2016.8px;font-size:28px;color:#474747;letter-spacing:-0.39px;">Standard Resin_Normal</span>
<span class="t" style="left:2314.0px;top:2084.3px;font-size:28px;color:#474747;letter-spacing:-0.45px;">0.020mm</span>
<div style="position:absolute;left:2442px;top:2097px;width:30px;height:2px;background:#666;"></div>
<span class="t" style="left:2485.0px;top:2084.3px;font-size:28px;color:#474747;letter-spacing:-1.22px;">3.000s</span>
<svg style="position:absolute;left:0;top:0" width="2820" height="2250" viewBox="0 0 2820 2250"><path d="M2700.5,1968.5 L2712,1958 L2723.5,1968.5" fill="none" stroke="#666" stroke-width="2.6" stroke-linecap="round" stroke-linejoin="round"/><path d="M2700.5,2036.0 L2712,2025.5 L2723.5,2036.0" fill="none" stroke="#666" stroke-width="2.6" stroke-linecap="round" stroke-linejoin="round"/><path d="M2694,2097.5 L2701.5,2084 H2716.5 L2724,2097.5 L2716.5,2111 H2701.5 Z" fill="none" stroke="#777" stroke-width="2.4" stroke-linejoin="round"/><circle cx="2709" cy="2097.5" r="5.6" fill="#777"/></svg>
<div style="position:absolute;left:2088px;top:2142px;width:652px;height:76px;background:#0088ff;border-radius:20px;"></div>
<span class="t" style="left:2383.0px;top:2165.4px;font-size:32px;color:#fff;letter-spacing:-1.34px;">Slice</span>
</div></body></html>
